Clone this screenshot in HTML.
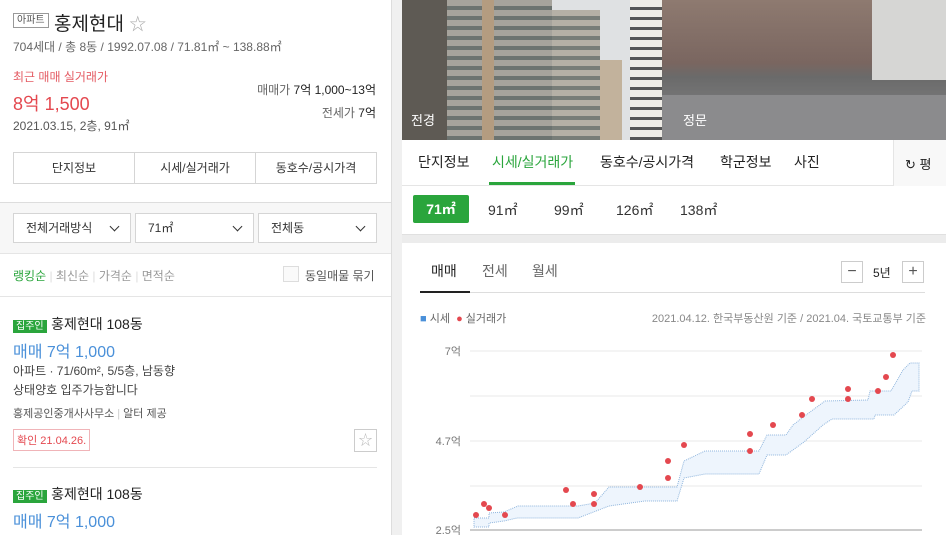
<!DOCTYPE html>
<html><head><meta charset="utf-8"><style>
*{margin:0;padding:0;box-sizing:border-box}
body{width:946px;height:535px;overflow:hidden;background:#f0f0f0;font-family:"Liberation Sans","Noto Sans CJK KR",sans-serif;color:#222;position:relative}
.a{position:absolute;white-space:nowrap}
#left{position:absolute;left:0;top:0;width:392px;height:535px;background:#fff;border-right:1px solid #ddd}
#right{position:absolute;left:402px;top:0;width:544px;height:535px;background:#fff}
.btn3{position:absolute;top:152px;left:13px;width:364px;height:32px;border:1px solid #d5d5d5;display:flex}
.btn3 div{flex:1;text-align:center;line-height:30px;font-size:12px;color:#333;border-left:1px solid #d5d5d5}
.btn3 div:first-child{border:none}
.sel{position:absolute;top:213px;height:30px;border:1px solid #d5d5d5;background:#fff;font-size:12px;line-height:28px;padding-left:12px;color:#333}
.sel:after{content:"";position:absolute;right:12px;top:9px;width:6px;height:6px;border-right:1.5px solid #333;border-bottom:1.5px solid #333;transform:rotate(45deg)}
.tag{background:#2aa53c;color:#fff;font-size:10px;padding:1px 3px}
</style></head><body>
<div id="left">
<div class="a" style="left:13px;top:13px;border:1px solid #999;font-size:10px;color:#555;padding:0 3px;line-height:13px">아파트</div>
<div class="a" style="left:54px;top:9px;font-size:19px;color:#222">홍제현대 <span style="color:#aaa;font-size:17px">☆</span></div>
<div class="a" style="left:13px;top:38px;font-size:12px;color:#666">704세대 / 총 8동 / 1992.07.08 / 71.81㎡ ~ 138.88㎡</div>
<div class="a" style="left:13px;top:68px;font-size:12px;color:#e45b63">최근 매매 실거래가</div>
<div class="a" style="left:13px;top:90px;font-size:18px;color:#e4484f">8억 1,500</div>
<div class="a" style="left:13px;top:117px;font-size:12px;color:#555">2021.03.15, 2층, 91㎡</div>
<div class="a" style="right:15px;top:81px;font-size:12px;color:#222"><span style="color:#666">매매가</span> 7억 1,000~13억</div>
<div class="a" style="right:15px;top:104px;font-size:12px;color:#222"><span style="color:#666">전세가</span> 7억</div>
<div class="btn3"><div>단지정보</div><div>시세/실거래가</div><div>동호수/공시가격</div></div>
<div class="a" style="left:0;top:202px;width:391px;height:52px;background:#f7f7f7;border-top:1px solid #ddd;border-bottom:1px solid #e5e5e5"></div>
<div class="sel" style="left:13px;width:118px">전체거래방식</div>
<div class="sel" style="left:135px;width:119px">71㎡</div>
<div class="sel" style="left:258px;width:119px">전체동</div>
<div class="a" style="left:13px;top:267px;font-size:12px;color:#999"><b style="color:#2aa53c;font-weight:normal">랭킹순</b> <span style="color:#ddd">|</span> 최신순 <span style="color:#ddd">|</span> 가격순 <span style="color:#ddd">|</span> 면적순</div>
<div class="a" style="left:283px;top:266px;width:16px;height:16px;border:1px solid #ddd;background:#fafafa"></div>
<div class="a" style="left:305px;top:267px;font-size:12px;color:#555">동일매물 묶기</div>
<div class="a" style="left:0;top:296px;width:391px;border-top:1px solid #e5e5e5"></div>
<div class="a" style="left:13px;top:314px"><span class="tag">집주인</span> <span style="font-size:14px">홍제현대 108동</span></div>
<div class="a" style="left:13px;top:338px;font-size:16px;color:#4a90d9">매매 7억 1,000</div>
<div class="a" style="left:13px;top:362px;font-size:12px;color:#444">아파트 · 71/60m², 5/5층, 남동향</div>
<div class="a" style="left:13px;top:381px;font-size:12px;color:#444">상태양호 입주가능합니다</div>
<div class="a" style="left:13px;top:405px;font-size:11px;color:#555">홍제공인중개사사무소 <span style="color:#ccc">|</span> 알터 제공</div>
<div class="a" style="left:13px;top:429px;border:1px solid #f0b4b8;color:#e4484f;font-size:11px;padding:2px 3px">확인 21.04.26.</div>
<div class="a" style="left:354px;top:429px;width:23px;height:23px;border:1px solid #ccc;color:#bbb;text-align:center;font-size:14px;line-height:21px">☆</div>
<div class="a" style="left:13px;top:467px;width:364px;border-top:1px solid #e5e5e5"></div>
<div class="a" style="left:13px;top:484px"><span class="tag">집주인</span> <span style="font-size:14px">홍제현대 108동</span></div>
<div class="a" style="left:13px;top:508px;font-size:16px;color:#4a90d9">매매 7억 1,000</div>
</div>
<div id="right">
<div class="a" style="left:0;top:0;width:260px;height:140px;background:#dfe1e3"></div>
<div class="a" style="left:0;top:0;width:45px;height:140px;background:#5e5a54"></div>
<div class="a" style="left:45px;top:0;width:105px;height:140px;background:repeating-linear-gradient(180deg,#a6a39c 0 6px,#6c7370 6px 10px),#a8a49c"></div>
<div class="a" style="left:80px;top:0;width:12px;height:140px;background:#b49c80"></div>
<div class="a" style="left:150px;top:10px;width:48px;height:130px;background:repeating-linear-gradient(180deg,#b5b0a6 0 6px,#787d78 6px 10px)"></div>
<div class="a" style="left:198px;top:60px;width:22px;height:80px;background:#c2b29c"></div>
<div class="a" style="left:228px;top:0;width:32px;height:140px;background:repeating-linear-gradient(180deg,#eeece6 0 7px,#555 7px 10px)"></div>
<div class="a" style="left:260px;top:0;width:284px;height:140px;background:linear-gradient(180deg,#8e7a70 0%,#7a6660 45%,#6a6a6a 55%,#8a8a8c 100%)"></div>
<div class="a" style="left:260px;top:95px;width:284px;height:45px;background:#8b8b8d"></div>
<div class="a" style="left:470px;top:0;width:74px;height:80px;background:#d6d6d4"></div>
<div class="a" style="left:9px;top:110px;color:#fff;font-size:13px">전경</div>
<div class="a" style="left:281px;top:110px;color:#fff;font-size:13px">정문</div>
<div class="a" style="left:0;top:140px;width:544px;height:46px;border-bottom:1px solid #e5e5e5"></div>
<div class="a" style="left:16px;top:152px;font-size:14px;color:#222">단지정보</div>
<div class="a" style="left:90px;top:152px;font-size:14px;color:#2aa53c">시세/실거래가</div>
<div class="a" style="left:87px;top:182px;width:86px;height:3px;background:#2aa53c"></div>
<div class="a" style="left:198px;top:152px;font-size:14px;color:#222">동호수/공시가격</div>
<div class="a" style="left:318px;top:152px;font-size:14px;color:#222">학군정보</div>
<div class="a" style="left:392px;top:152px;font-size:14px;color:#222">사진</div>
<div class="a" style="left:491px;top:140px;width:53px;height:46px;background:#f8f8f8;border-left:1px solid #e5e5e5;font-size:13px;padding:14px 0 0 11px">↻ 평</div>
<div class="a" style="left:11px;top:195px;width:56px;height:28px;background:#2aa53c;border-radius:2px;color:#fff;font-size:14px;font-weight:bold;text-align:center;line-height:28px">71㎡</div>
<div class="a" style="left:86px;top:200px;font-size:14px;color:#333">91㎡</div>
<div class="a" style="left:152px;top:200px;font-size:14px;color:#333">99㎡</div>
<div class="a" style="left:214px;top:200px;font-size:14px;color:#333">126㎡</div>
<div class="a" style="left:278px;top:200px;font-size:14px;color:#333">138㎡</div>
<div class="a" style="left:0;top:234px;width:544px;height:9px;background:#ececec;border-top:1px solid #e0e0e0"></div>
<div class="a" style="left:29px;top:261px;font-size:14px;color:#222">매매</div>
<div class="a" style="left:80px;top:261px;font-size:14px;color:#666">전세</div>
<div class="a" style="left:130px;top:261px;font-size:14px;color:#666">월세</div>
<div class="a" style="left:18px;top:292px;width:505px;border-top:1px solid #ddd"></div>
<div class="a" style="left:18px;top:291px;width:50px;height:2px;background:#222"></div>
<div class="a" style="left:439px;top:261px;width:22px;height:22px;border:1px solid #ccc;text-align:center;line-height:19px;font-size:16px;color:#555">−</div>
<div class="a" style="left:471px;top:264px;font-size:12px">5년</div>
<div class="a" style="left:500px;top:261px;width:22px;height:22px;border:1px solid #ccc;text-align:center;line-height:19px;font-size:16px;color:#555">+</div>
<div class="a" style="left:18px;top:310px;font-size:11px;color:#666"><span style="color:#4a90d9">■</span> 시세 &nbsp;<span style="color:#e4484f">●</span> 실거래가</div>
<div class="a" style="right:20px;top:310px;font-size:11px;color:#888">2021.04.12. 한국부동산원 기준 / 2021.04. 국토교통부 기준</div>
</div>
<svg class="a" style="left:0;top:0" width="946" height="535">
<g stroke="#e8e8e8"><line x1="470" y1="351" x2="922" y2="351"/><line x1="470" y1="396" x2="922" y2="396"/><line x1="470" y1="441" x2="922" y2="441"/><line x1="470" y1="486" x2="922" y2="486"/></g>
<line x1="470" y1="530" x2="922" y2="530" stroke="#999"/>
<g font-size="11" fill="#777" text-anchor="end" font-family="Liberation Sans,Noto Sans CJK KR,sans-serif"><text x="461" y="355">7억</text><text x="461" y="445">4.7억</text><text x="461" y="534">2.5억</text></g>
<polygon fill="#eef5fd" stroke="#8fb5dd" stroke-dasharray="1 1" stroke-width="1" points="474,518 489,518 489,513 504,512 518,506 578,506 595,503 609,487 677,487 684,461 705,451 759,451 767,435 786,435 793,425 806,415 825,401 868,400 870,391 891,391 903,370 910,363 919,363 919,391 912,391 908,402 894,415 875,415 874,419 832,419 823,425 804,442 786,455 767,455 759,474 705,474 684,478 677,501 645,501 609,506 578,518 517,518 504,521 489,523 489,527 474,527"/>
<g fill="#e4484f">
<circle cx="476" cy="515" r="3"/><circle cx="484" cy="504" r="3"/><circle cx="489" cy="508" r="3"/><circle cx="505" cy="515" r="3"/><circle cx="566" cy="490" r="3"/><circle cx="573" cy="504" r="3"/><circle cx="594" cy="494" r="3"/><circle cx="594" cy="504" r="3"/><circle cx="640" cy="487" r="3"/><circle cx="668" cy="461" r="3"/><circle cx="668" cy="478" r="3"/><circle cx="684" cy="445" r="3"/><circle cx="750" cy="434" r="3"/><circle cx="750" cy="451" r="3"/><circle cx="773" cy="425" r="3"/><circle cx="802" cy="415" r="3"/><circle cx="812" cy="399" r="3"/><circle cx="848" cy="389" r="3"/><circle cx="848" cy="399" r="3"/><circle cx="878" cy="391" r="3"/><circle cx="886" cy="377" r="3"/><circle cx="893" cy="355" r="3"/>
</g>
</svg>
</body></html>
